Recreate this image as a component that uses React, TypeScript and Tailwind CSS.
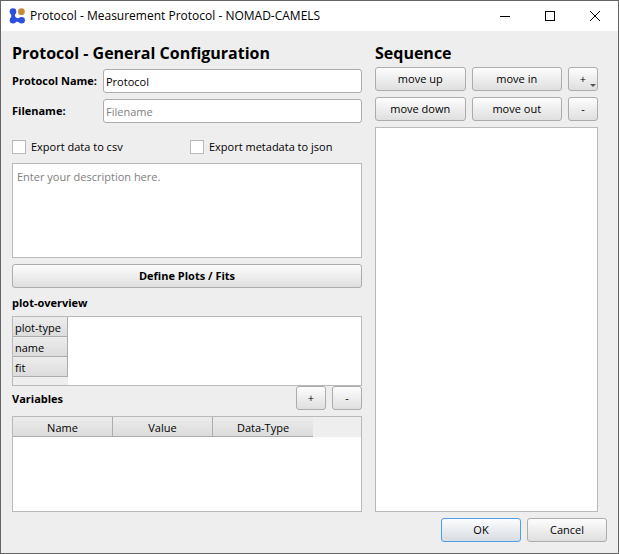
import type { ComponentProps } from "react";

const raised =
  "h-6 rounded-[3px] border border-[#acacac] bg-gradient-to-b from-[#fdfdfd] to-[#dfdfdf] text-center leading-4";
const headerCell =
  "h-5 border-b border-[#acacac] bg-gradient-to-b from-[#ececec] to-[#dcdcdc] pt-[2px] pr-0 pb-0 font-normal";

function Button({ className = "", ...props }: ComponentProps<"button">) {
  return <button type="button" className={`${raised} ${className}`} {...props} />;
}

function Logo() {
  return (
    <svg viewBox="0 0 16 16" className="size-4" aria-hidden="true">
      <g fill="#2b50dc">
        <circle cx="4" cy="3.6" r="3.3" />
        <circle cx="4" cy="12.2" r="3.3" />
        <circle cx="12.6" cy="12.2" r="3.3" />
        <path d="M1.5 5C2.6 7 2.6 9 1.5 11h5C7.5 13.5 9 13.6 10.5 14.2V10.2C8.6 10.6 6.4 9.6 6 8 5.8 7 6 6 6.6 5z" />
        <path d="M5 10.5h7v3.3H5z" />
      </g>
      <circle cx="12.4" cy="3.7" r="3.4" fill="#c38d35" />
    </svg>
  );
}

function TitleBar() {
  return (
    <header className="flex h-[30px] items-center bg-white pl-2">
      <Logo />
      <h1 className="ml-[5px] flex-1 whitespace-nowrap text-[12px]">
        Protocol - Measurement Protocol - NOMAD-CAMELS
      </h1>
      <div className="flex h-full">
        <button type="button" aria-label="Minimize" className="flex w-[45px] items-center justify-center">
          <svg viewBox="0 0 10 10" className="size-[10px]" shapeRendering="crispEdges">
            <path d="M0 5h10v1H0z" />
          </svg>
        </button>
        <button type="button" aria-label="Maximize" className="flex w-[45px] items-center justify-center">
          <svg viewBox="0 0 10 10" className="size-[10px]" shapeRendering="crispEdges">
            <path d="M0 0h10v10H0zM1 1v8h8V1z" fillRule="evenodd" />
          </svg>
        </button>
        <button type="button" aria-label="Close" className="flex w-[46px] items-center justify-center">
          <svg viewBox="0 0 10 10" className="size-[10px]" stroke="#000" fill="none">
            <path d="M0 0l10 10M10 0L0 10" />
          </svg>
        </button>
      </div>
    </header>
  );
}

function GeneralConfiguration() {
  const input =
    "h-6 min-w-0 rounded-[3px] border border-[#acacac] bg-white px-[2px] outline-none placeholder:text-[#808080]";
  const check = "size-[14px] appearance-none border border-[#b9b9b9] bg-white";
  return (
    <section className="flex min-w-0 flex-col">
      <h2 className="mb-1 whitespace-nowrap text-[16px] font-bold leading-6">Protocol - General Configuration</h2>
      <div className="grid grid-cols-[85px_minmax(0,1fr)] items-center gap-x-[6px] gap-y-[6px]">
        <label htmlFor="name" className="whitespace-nowrap font-bold">Protocol Name:</label>
        <input id="name" defaultValue="Protocol" className={input} />
        <label htmlFor="file" className="font-bold">Filename:</label>
        <input id="file" placeholder="Filename" className={input} />
      </div>
      <div className="mt-4 mb-2 grid grid-cols-[178px_minmax(0,1fr)]">
        <label className="flex items-center gap-[5px] whitespace-nowrap">
          <input type="checkbox" className={check} />
          Export data to csv
        </label>
        <label className="flex items-center gap-[5px] whitespace-nowrap">
          <input type="checkbox" className={check} />
          Export metadata to json
        </label>
      </div>
      <textarea
        aria-label="Description"
        placeholder="Enter your description here."
        className="h-[95px] resize-none border border-[#b9b9b9] bg-white px-1 py-[5px] outline-none placeholder:text-[#808080]"
      />
      <Button className="mt-[6px] font-bold">Define Plots / Fits</Button>
      <h3 className="mt-[7px] mb-[5px] font-bold">plot-overview</h3>
      <div className="flex h-[70px] border border-[#b9b9b9] bg-white">
        <div className="w-[55px] bg-[#eeeeee]">
          <table className="w-full border-separate border-spacing-0 text-left">
            <tbody>
              {["plot-type", "name", "fit"].map((title) => (
                <tr key={title}>
                  <th scope="row" className={`${headerCell} whitespace-nowrap border-r pl-[2px]`}>
                    {title}
                  </th>
                </tr>
              ))}
            </tbody>
          </table>
        </div>
      </div>
      <div className="mb-[6px] flex items-center gap-[6px]">
        <h3 className="flex-1 pt-[2px] font-bold">Variables</h3>
        <Button className="w-[30px]" aria-label="Add variable">+</Button>
        <Button className="w-[30px]" aria-label="Remove variable">-</Button>
      </div>
      <div className="min-h-24 flex-1 border border-[#b9b9b9] bg-white">
        <div className="bg-[#eeeeee]">
          <table className="w-[300px] table-fixed border-separate border-spacing-0">
            <thead>
              <tr>
                {["Name", "Value", "Data-Type"].map((title) => (
                  <th key={title} scope="col" className={`${headerCell} border-r pl-0 last:border-r-0`}>
                    {title}
                  </th>
                ))}
              </tr>
            </thead>
          </table>
        </div>
      </div>
    </section>
  );
}

function Sequence() {
  return (
    <section className="flex min-w-0 flex-col">
      <h2 className="mb-[2px] text-[16px] font-bold leading-6">Sequence</h2>
      <div className="mb-[6px] grid grid-cols-[minmax(0,1fr)_minmax(0,1fr)_30px] gap-[6px]">
        <Button>move up</Button>
        <Button>move in</Button>
        <Button className="relative" aria-label="Add step">
          +
          <svg viewBox="0 0 6 3" className="absolute right-[1px] bottom-[3px] h-[3px] w-[6px]" fill="#555">
            <path d="M0 0h6L3 3z" />
          </svg>
        </Button>
        <Button>move down</Button>
        <Button>move out</Button>
        <Button aria-label="Remove step">-</Button>
      </div>
      <div className="flex-1 border border-[#b9b9b9] bg-white" />
    </section>
  );
}

export default function App() {
  return (
    <main className="flex min-h-screen flex-col border border-[#646464] bg-[#eeeeee] font-['Open_Sans','Noto_Sans',sans-serif] text-[11px] leading-4 text-black">
      <TitleBar />
      <div className="grid flex-1 grid-cols-[minmax(0,350fr)_minmax(0,223fr)] gap-x-[13px] pt-[10px] pr-5 pl-[11px]">
        <GeneralConfiguration />
        <Sequence />
      </div>
      <footer className="flex justify-end gap-[6px] pt-[6px] pr-[11px] pb-[11px]">
        <button
          type="button"
          className="h-6 w-20 rounded-[3px] border border-[#4f9fe8] bg-gradient-to-b from-[#fcfdfe] to-[#d8dde3] text-center leading-4"
        >
          OK
        </button>
        <Button className="w-20">Cancel</Button>
      </footer>
    </main>
  );
}
